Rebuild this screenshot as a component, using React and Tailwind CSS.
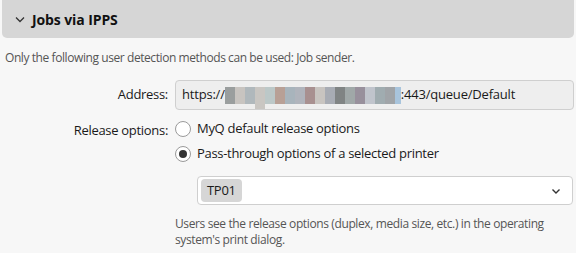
import React from "react";

const blur = [
  "#9a9e9e", "#c8c4c0", "#b0b8bc", "#c9c6c2", "#bcc8c8", "#b8a096", "#a8b4bc", "#b0b4bc", "#a89090",
  "#c8c4c0", "#a8acb4", "#808484", "#a0a8a8", "#98909c", "#c0c4cc", "#a0acb0", "#a0a4a8", "#a8c4dc",
];

export default function App() {
  return (
    <div
      className="w-[576px] h-[253px] overflow-hidden bg-[#f7f7f7] pl-[2px] pr-[2px] text-[#1a1a1a]"
      style={{ fontFamily: "'Open Sans', 'Noto Sans', sans-serif" }}
    >
      <div className="h-[38px] bg-[#d6d6d6] rounded-b-[5px] flex items-center pl-[12px] gap-[6px]">
        <svg width="12" height="12" viewBox="0 0 12 12" fill="none" stroke="#333" strokeWidth="1.3">
          <path d="M2 4.5 L6 8.5 L10 4.5" />
        </svg>
        <span className="text-[14px] font-bold text-[#111] tracking-[-0.1px]">Jobs via IPPS</span>
      </div>
      <div className="pl-[3px] mt-[11px] text-[12px] leading-[18px] text-[#555] tracking-[-0.42px]">
        Only the following user detection methods can be used: Job sender.
      </div>
      <div className="grid grid-cols-[166px_1fr] gap-x-[7px] mt-[13px] text-[13px] tracking-[-0.3px]">
        <div className="flex items-center justify-end h-[30px]">Address:</div>
        <div className="h-[30px] bg-[#eeeeee] border border-[#cfcfcf] rounded-[4px] flex items-center pl-[6px] relative tracking-[-0.2px]">
          <span>https://</span>
          <span className="flex h-[17px] relative">
            {blur.map((c, i) => (
              <span
                key={i}
                className={i === 17 ? "w-[6px] h-full" : "w-[10px] h-full"}
                style={{ backgroundColor: c }}
              />
            ))}
            <span className="absolute left-[30px] top-[17px] w-[10px] h-[5px] bg-[#c9c6c2]" />
          </span>
          <span>:443/queue/Default</span>
        </div>
        <div className="flex justify-end pt-[11px] leading-[18px]">Release options:</div>
        <div className="pt-[8px]">
          <div className="flex items-center gap-[6px] h-[22px]">
            <span className="w-[16px] h-[16px] rounded-full border border-[#9a9a9a] bg-white" />
            <span>MyQ default release options</span>
          </div>
          <div className="flex items-center gap-[6px] h-[22px] mt-[3px]">
            <span className="w-[16px] h-[16px] rounded-full border border-[#9a9a9a] bg-white flex items-center justify-center">
              <span className="w-[8px] h-[8px] rounded-full bg-[#333]" />
            </span>
            <span>Pass-through options of a selected printer</span>
          </div>
          <div className="ml-[22px] mt-[11px] mr-[1px] h-[29px] bg-white border border-[#cfcfcf] rounded-[4px] flex items-center pl-[3px] pr-[10px]">
            <span className="h-[23px] px-[6px] rounded-[4px] bg-[#d6d6d6] flex items-center">TP01</span>
            <span className="flex-1" />
            <svg width="12" height="12" viewBox="0 0 12 12" fill="none" stroke="#333" strokeWidth="1.4">
              <path d="M2.5 4.5 L6 8 L9.5 4.5" />
            </svg>
          </div>
          <div className="mt-[11px] text-[12px] leading-[16px] text-[#555] tracking-[-0.38px] w-[380px]">
            Users see the release options (duplex, media size, etc.) in the operating system's print dialog.
          </div>
        </div>
      </div>
    </div>
  );
}
